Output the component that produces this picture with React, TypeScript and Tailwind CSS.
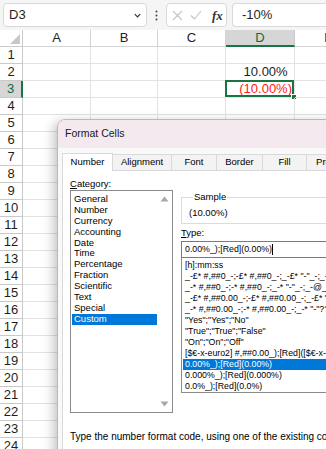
import React from 'react';

const COLS = ['A', 'B', 'C', 'D', 'E'];
const COL_W = ['w-[68px]', 'w-[67px]', 'w-[68px]', 'w-[69px]', 'w-[68px]'];
const ROWS = Array.from({ length: 24 }, (_, i) => i + 1);

const CATEGORIES = [
  'General',
  'Number',
  'Currency',
  'Accounting',
  'Date',
  'Time',
  'Percentage',
  'Fraction',
  'Scientific',
  'Text',
  'Special',
  'Custom',
];

const FORMATS = [
  '[h]:mm:ss',
  '_-£* #,##0_-;-£* #,##0_-;_-£* "-"_-;_-@_-',
  '_-* #,##0_-;-* #,##0_-;_-* "-"_-;_-@_-',
  '_-£* #,##0.00_-;-£* #,##0.00_-;_-£* "-"??_-;_-@_-',
  '_-* #,##0.00_-;-* #,##0.00_-;_-* "-"??_-;_-@_-',
  '"Yes";"Yes";"No"',
  '"True";"True";"False"',
  '"On";"On";"Off"',
  '[$€-x-euro2] #,##0.00_);[Red]([$€-x-euro2] #,##0.00)',
  '0.00%_);[Red](0.00%)',
  '0.000%_);[Red](0.000%)',
  '0.0%_);[Red](0.0%)',
];

const TABS = [
  { label: 'Number', w: 'w-[51px]' },
  { label: 'Alignment', w: 'w-[59px]' },
  { label: 'Font', w: 'w-[45px]' },
  { label: 'Border', w: 'w-[46px]' },
  { label: 'Fill', w: 'w-[44px]' },
  { label: 'Protection', w: 'w-[62px]' },
];

const FormulaBar = () => (
  <div className="h-[30px] bg-[#f5f5f5] flex items-center pl-[3px]">
    {/* Name box */}
    <div className="w-[144px] h-[24px] bg-white border border-[#d9d9d9] rounded-[4px] flex items-center justify-between pl-[5px] pr-[4px]">
      <span className="text-[13px] text-[#1f1f1f]">D3</span>
      <svg width="9" height="9" viewBox="0 0 10 10">
        <polyline points="2,3.5 5,6.5 8,3.5" fill="none" stroke="#333" strokeWidth="1.3" />
      </svg>
    </div>
    {/* dots */}
    <div className="w-[19px] flex justify-center">
      <svg width="3" height="11" viewBox="0 0 3 11">
        <circle cx="1.5" cy="1.5" r="1" fill="#444" />
        <circle cx="1.5" cy="5.5" r="1" fill="#444" />
        <circle cx="1.5" cy="9.5" r="1" fill="#444" />
      </svg>
    </div>
    {/* cancel / enter / fx */}
    <div className="w-[61px] h-[24px] bg-white border border-[#d9d9d9] rounded-[4px] flex items-center pl-[5px] gap-[7px]">
      <svg width="11" height="11" viewBox="0 0 11 11">
        <path d="M1 1 L10 10 M10 1 L1 10" stroke="#c4c4c4" strokeWidth="1.1" />
      </svg>
      <svg width="12" height="10" viewBox="0 0 12 10">
        <polyline points="1,5.5 4.5,9 11,1" fill="none" stroke="#c4c4c4" strokeWidth="1.1" />
      </svg>
      <span className="ml-[3px] font-['Liberation_Serif',serif] italic font-bold text-[13px] text-[#333] leading-none">fx</span>
    </div>
    {/* formula */}
    <div className="ml-[5px] flex-1 h-[24px] bg-white border border-[#d9d9d9] rounded-l-[4px] border-r-0 flex items-center pl-[9px]">
      <span className="text-[13px] text-[#1f1f1f]">-10%</span>
    </div>
  </div>
);

const Sheet = () => (
  <div className="flex flex-col">
    {/* column headers */}
    <div className="flex h-[17px] bg-white">
      <div className="w-[23px] shrink-0 border-r border-b border-[#c9c9c9] flex items-end justify-end p-[2px]">
        <svg width="10" height="10" viewBox="0 0 10 10">
          <polygon points="10,0 10,10 0,10" fill="#c8c8c8" />
        </svg>
      </div>
      {COLS.map((c, i) => (
        <div
          key={c}
          className={`${COL_W[i]} shrink-0 flex items-center justify-center text-[13px] ${
            c === 'D'
              ? 'bg-[#d6d6d6] text-[#0e6b38] border-b-2 border-b-[#1a7343] border-r border-r-[#c9c9c9]'
              : 'text-[#222] border-r border-b border-[#d4d4d4]'
          }`}
        >
          {c}
        </div>
      ))}
    </div>
    {ROWS.map((r) => (
      <div key={r} className="flex h-[17px]">
        <div
          className={`w-[23px] shrink-0 flex items-center justify-center text-[13px] ${
            r === 3
              ? 'bg-[#d6d6d6] text-[#0e6b38] border-r-2 border-r-[#1a7343] border-b border-b-[#c9c9c9]'
              : 'bg-white text-[#1e1e1e] border-r border-b border-[#c9c9c9]'
          }`}
        >
          {r}
        </div>
        {COLS.map((c, i) => {
          const isD2 = c === 'D' && r === 2;
          const isD3 = c === 'D' && r === 3;
          return (
            <div
              key={c}
              className={`${COL_W[i]} shrink-0 relative border-r border-b border-[#e3e3e3] flex items-center justify-end pr-[2px] text-[13px]`}
            >
              {isD2 && (
                <span className="text-[#1e1e1e]">
                  10.00%<span className="invisible">)</span>
                </span>
              )}
              {isD3 && (
                <>
                  <span className="text-[#ff1a1a]">(10.00%)</span>
                  <div className="absolute -left-[1px] -top-[1px] right-0 bottom-0 border-2 border-[#1a7343]" />
                  <div className="absolute -right-[3px] -bottom-[3px] w-[6px] h-[6px] bg-[#1a7343] border border-white" />
                </>
              )}
            </div>
          );
        })}
      </div>
    ))}
  </div>
);

const ArrowUp = () => (
  <svg width="9" height="6" viewBox="0 0 9 6">
    <polygon points="0.5,5.5 4.5,0.5 8.5,5.5" fill="#a8a8a8" />
  </svg>
);

const ArrowDown = () => (
  <svg width="9" height="6" viewBox="0 0 9 6">
    <polygon points="0.5,0.5 8.5,0.5 4.5,5.5" fill="#a8a8a8" />
  </svg>
);

const FormatCells = () => (
  <div className="absolute left-[57px] top-[119px] w-[300px] h-[350px] rounded-tl-[8px] border border-[#b9b9b9] bg-[#f9f9f9] shadow-[-3px_3px_12px_rgba(0,0,0,0.25)] overflow-hidden flex flex-col font-['Liberation_Sans',Arial,sans-serif] text-black">
    <div className="h-[28px] shrink-0 bg-[#f3e9ee] flex items-center pl-[7px] text-[10.5px] text-[#1a1a1a]">
      Format Cells
    </div>
    <div className="pl-[4px] pt-[4px] flex flex-col">
      {/* tabs */}
      <div className="flex items-end h-[18px]">
        {TABS.map((t, i) => (
          <div
            key={t.label}
            className={`${t.w} shrink-0 flex items-center justify-center text-[9.5px] border-t border-r border-[#d9d9d9] ${
              i === 0
                ? 'h-[18px] bg-white border-l relative top-[1px] z-10'
                : 'h-[16px] bg-[#f3f3f3]'
            }`}
          >
            {t.label}
          </div>
        ))}
      </div>
      {/* page */}
      <div className="border border-[#d9d9d9] bg-white pl-[7px] pt-[7px] h-[300px]">
        <div className="grid grid-cols-[103px_8px_1fr]">
          {/* category column */}
          <div className="flex flex-col">
            <div className="text-[9.5px] leading-[12px]">
              <span className="underline">C</span>ategory:
            </div>
            <div className="h-[223px] border border-[#8a8a8a] bg-white flex">
              <div className="flex-1 pt-[3px] pl-[1px]">
                {CATEGORIES.map((c) => (
                  <div
                    key={c}
                    className={`h-[10.9px] leading-[10.9px] text-[9.5px] pl-[2px] ${
                      c === 'Custom' ? 'bg-[#0078d7] text-white' : ''
                    }`}
                  >
                    {c}
                  </div>
                ))}
              </div>
              <div className="w-[15px] flex flex-col justify-between items-center py-[5px]">
                <ArrowUp />
                <ArrowDown />
              </div>
            </div>
          </div>
          <div />
          {/* right column */}
          <div className="flex flex-col pt-[13px]">
            <fieldset className="border border-[#dcdcdc] pl-[7px] pt-[4px] pb-[4px] h-[33px]">
              <legend className="ml-[4px] px-[1px] text-[9.5px] leading-[12px]">Sample</legend>
              <div className="text-[9.5px] leading-[12px]">(10.00%)</div>
            </fieldset>
            <div className="mt-[3px] text-[9.5px] leading-[12px]">
              <span className="underline">T</span>ype:
            </div>
            <div className="mt-[2px] h-[17px] border border-[#7a7a7a] bg-white flex items-center pl-[3px] text-[8.8px] whitespace-nowrap">
              0.00%_);[Red](0.00%)
              <span className="inline-block w-[1px] h-[11px] bg-black" />
            </div>
            <div className="h-[135px] border border-t-0 border-[#8a8a8a] bg-white pt-[1.5px] pl-[1px] overflow-hidden">
              {FORMATS.map((f, i) => (
                <div
                  key={i}
                  className={`h-[11px] leading-[11px] text-[8.8px] pl-[2px] whitespace-nowrap ${
                    i === 9 ? 'bg-[#0078d7] text-white' : ''
                  }`}
                >
                  {f}
                </div>
              ))}
            </div>
          </div>
        </div>
        <div className="mt-[18px] text-[10px] leading-[12px] whitespace-nowrap">
          Type the number format code, using one of the existing codes as a starting point.
        </div>
      </div>
    </div>
  </div>
);

export default function App() {
  return (
    <div className="relative w-[326px] h-[449px] overflow-hidden bg-white font-['Liberation_Sans',Arial,sans-serif]">
      <FormulaBar />
      <Sheet />
      <FormatCells />
    </div>
  );
}
